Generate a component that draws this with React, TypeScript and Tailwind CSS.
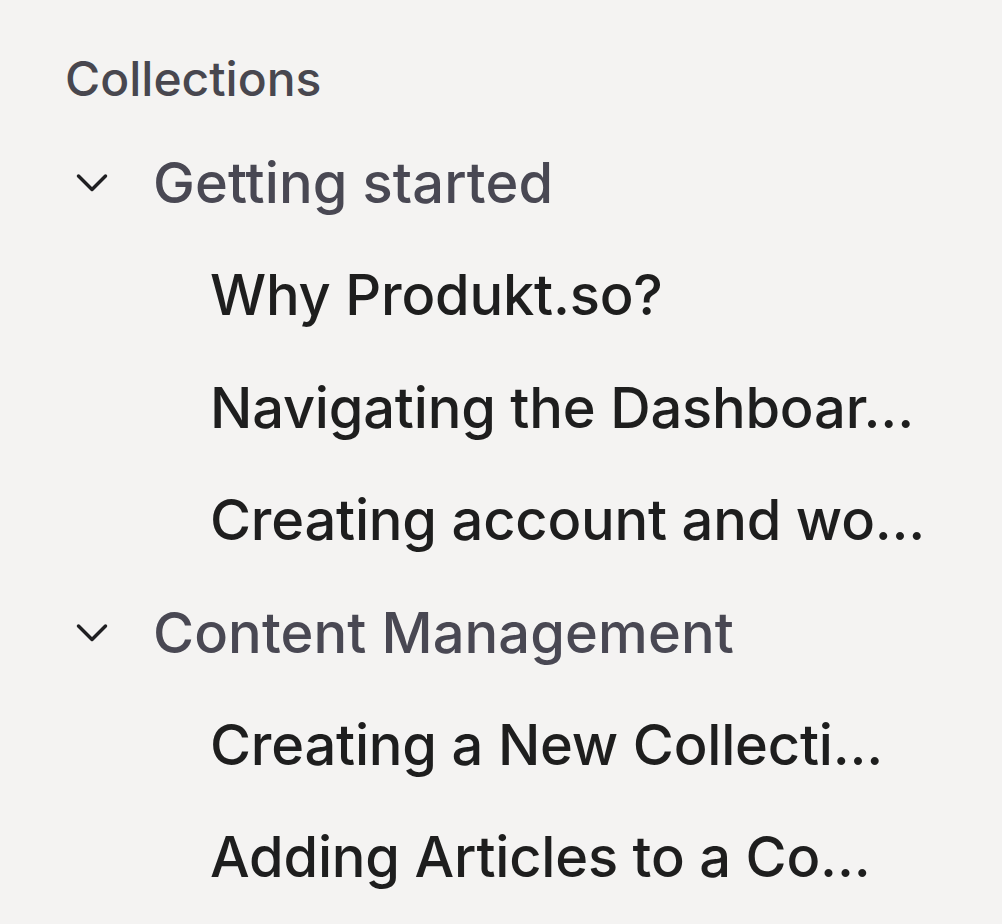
const groups = [
  {
    title: "Getting started",
    items: ["Why Produkt.so?", "Navigating the Dashboar...", "Creating account and wo..."],
  },
  {
    title: "Content Management",
    items: ["Creating a New Collecti...", "Adding Articles to a Co..."],
  },
];

function Chevron() {
  return (
    <svg width="32" height="20" viewBox="0 0 32 20" fill="none" className="shrink-0">
      <path d="M2.5 3 L16 16.5 L29.5 3" stroke="#1f1f22" strokeWidth="3.5" strokeLinecap="round" strokeLinejoin="round" />
    </svg>
  );
}

export default function App() {
  return (
    <div className="min-h-screen w-full bg-[#f4f3f2] font-['Inter',sans-serif] font-medium">
      <div className="pl-[65px] pt-[44px] w-[960px]">
        <div className="h-[83px] text-[48px] leading-[70px] text-[#48474f]">Collections</div>
        {groups.map((g) => (
          <div key={g.title}>
            <div className="flex items-center h-[112px]">
              <span className="ml-[11px] flex"><Chevron /></span>
              <span className="ml-[45px] text-[56px] text-[#494853] tracking-[0.1px]">{g.title}</span>
            </div>
            {g.items.map((it) => (
              <div key={it} className="h-[112.5px] flex items-center pl-[145px]">
                <span className="whitespace-nowrap text-[56px] text-[#1e1e1e] font-[550] tracking-[-0.2px]">{it}</span>
              </div>
            ))}
          </div>
        ))}
      </div>
    </div>
  );
}
